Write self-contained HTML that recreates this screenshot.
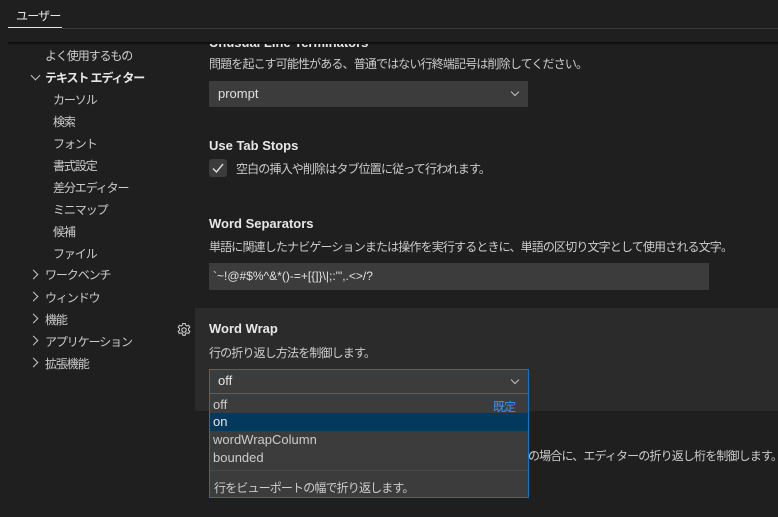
<!DOCTYPE html>
<html><head><meta charset="utf-8"><style>
body{margin:0;width:778px;height:517px;background:#1f1f1f;overflow:hidden;position:relative;font-family:"Segoe UI","Liberation Sans","Noto Sans CJK JP",sans-serif;font-size:13px;color:#cccccc}
.a{position:absolute;white-space:nowrap}
.nav{color:#cccccc;font-size:12px;letter-spacing:-1.1px}
.j{font-size:12px;letter-spacing:-0.85px}
.b{font-weight:bold;color:#e7e7e7}
.chev{position:absolute;width:6px;height:6px;border-right:1.3px solid #c5c5c5;border-bottom:1.3px solid #c5c5c5}
</style></head><body>
<div class="a" style="left:16px;top:7px;color:#e7e7e7;font-size:12px;letter-spacing:-0.8px">ユーザー</div>
<div class="a" style="left:8px;top:27px;width:54px;height:1px;background:#e7e7e7"></div>
<div class="a" style="left:62px;top:28px;width:716px;height:1px;background:#3c3c3c"></div>
<div class="a" style="left:8px;top:42px;width:770px;height:3px;background:linear-gradient(#0a0a0a,#1f1f1f)"></div>

<div class="a nav" style="left:45px;top:47px">よく使用するもの</div>
<div class="chev" style="left:32px;top:72px;transform:rotate(45deg)"></div>
<div class="a nav b" style="left:45px;top:69px">テキスト エディター</div>
<div class="a nav" style="left:53px;top:91px">カーソル</div>
<div class="a nav" style="left:53px;top:113px">検索</div>
<div class="a nav" style="left:53px;top:135px">フォント</div>
<div class="a nav" style="left:53px;top:157px">書式設定</div>
<div class="a nav" style="left:53px;top:179px">差分エディター</div>
<div class="a nav" style="left:53px;top:201px">ミニマップ</div>
<div class="a nav" style="left:53px;top:223px">候補</div>
<div class="a nav" style="left:53px;top:245px">ファイル</div>
<div class="chev" style="left:30px;top:271px;transform:rotate(-45deg)"></div>
<div class="a nav" style="left:45px;top:266px">ワークベンチ</div>
<div class="chev" style="left:30px;top:293px;transform:rotate(-45deg)"></div>
<div class="a nav" style="left:45px;top:289px">ウィンドウ</div>
<div class="chev" style="left:30px;top:315px;transform:rotate(-45deg)"></div>
<div class="a nav" style="left:45px;top:311px">機能</div>
<div class="chev" style="left:30px;top:337px;transform:rotate(-45deg)"></div>
<div class="a nav" style="left:45px;top:333px">アプリケーション</div>
<div class="chev" style="left:30px;top:359px;transform:rotate(-45deg)"></div>
<div class="a nav" style="left:45px;top:355px">拡張機能</div>

<div class="a b" style="left:209px;top:35px;clip-path:inset(9px 0 0 0)">Unusual Line Terminators</div>
<div class="a j" style="left:209px;top:55px">問題を起こす可能性がある、普通ではない行終端記号は削除してください。</div>
<div class="a" style="left:209px;top:81px;width:319px;height:26px;background:#3c3c3c"></div>
<div class="a" style="left:218px;top:86px;color:#e0e0e0">prompt</div>
<div class="chev" style="left:512px;top:89px;width:5px;height:5px;transform:rotate(45deg)"></div>

<div class="a b" style="left:209px;top:138px">Use Tab Stops</div>
<div class="a" style="left:209px;top:159px;width:18px;height:18px;background:#3c3c3c;border-radius:3px"></div>
<svg class="a" style="left:209px;top:159px" width="18" height="18"><path d="M4 9.5 L7.5 13 L14 5" stroke="#e0e0e0" stroke-width="1.4" fill="none"/></svg>
<div class="a j" style="left:236px;top:160px">空白の挿入や削除はタブ位置に従って行われます。</div>

<div class="a b" style="left:209px;top:216px">Word Separators</div>
<div class="a j" style="left:209px;top:238px">単語に関連したナビゲーションまたは操作を実行するときに、単語の区切り文字として使用される文字。</div>
<div class="a" style="left:209px;top:263px;width:500px;height:27px;background:#3c3c3c"></div>
<div class="a" style="left:213px;top:269px;font-size:12px;color:#e0e0e0">`~!@#$%^&amp;*()-=+[{]}\|;:'",.&lt;&gt;/?</div>

<div class="a" style="left:195px;top:308px;width:583px;height:103px;background:#2b2b2b"></div>
<svg class="a" style="left:176px;top:322px" width="16" height="16" viewBox="0 0 16 16"><circle cx="8" cy="8" r="2.2" fill="none" stroke="#c5c5c5" stroke-width="1.2"/><path d="M6.8 1.5h2.4l.4 1.8 1.3.7 1.7-.7 1.2 2-1.3 1.3v1.6l1.3 1.3-1.2 2-1.7-.7-1.3.7-.4 1.8H6.8l-.4-1.8-1.3-.7-1.7.7-1.2-2 1.3-1.3V6.6L2.2 5.3l1.2-2 1.7.7 1.3-.7z" fill="none" stroke="#c5c5c5" stroke-width="1.1"/></svg>
<div class="a b" style="left:209px;top:321px">Word Wrap</div>
<div class="a j" style="left:209px;top:344px">行の折り返し方法を制御します。</div>
<div class="a j" style="left:528px;top:447px">の場合に、エディターの折り返し桁を制御します。</div>

<div class="a" style="left:209px;top:369px;height:129px;border:1px solid #0078d4;background:#3c3c3c;box-sizing:border-box;width:320px"></div>
<div class="a" style="left:210px;top:393px;width:318px;height:1px;background:#0078d4"></div>
<div class="a" style="left:218px;top:373px;color:#e7e7e7">off</div>
<div class="chev" style="left:512px;top:377px;width:5px;height:5px;transform:rotate(45deg)"></div>
<div class="a" style="left:213px;top:397px">off</div>
<div class="a j" style="left:493px;top:398px;color:#3794ff">既定</div>
<div class="a" style="left:210px;top:413px;width:318px;height:18px;background:#04395e"></div>
<div class="a" style="left:213px;top:414px;color:#e7e7e7">on</div>
<div class="a" style="left:213px;top:432px">wordWrapColumn</div>
<div class="a" style="left:213px;top:450px">bounded</div>
<div class="a" style="left:210px;top:470px;width:318px;height:1px;background:#4a4a4a"></div>
<div class="a j" style="left:214px;top:479px">行をビューポートの幅で折り返します。</div>
</body></html>
